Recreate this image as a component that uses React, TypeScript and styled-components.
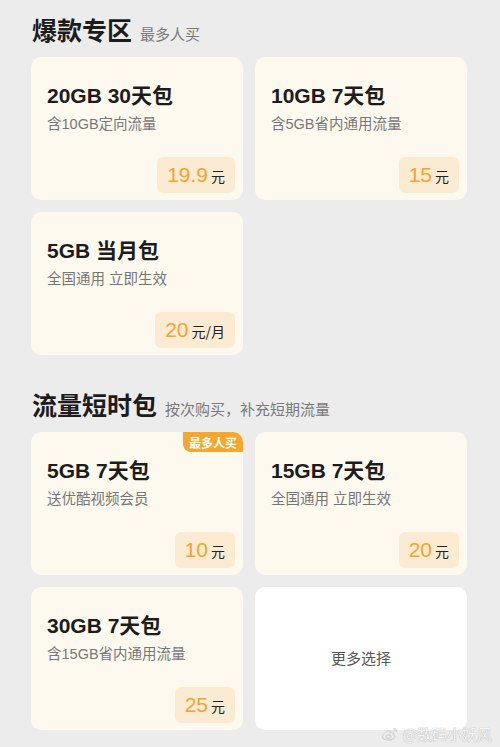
import styled, { createGlobalStyle } from 'styled-components';

type Plan = {
  title: string;
  desc: string;
  price: string;
  unit: string;
  badge?: string;
};

const hotPlans: Plan[] = [
  { title: '20GB 30天包', desc: '含10GB定向流量', price: '19.9', unit: '元' },
  { title: '10GB 7天包', desc: '含5GB省内通用流量', price: '15', unit: '元' },
  { title: '5GB 当月包', desc: '全国通用 立即生效', price: '20', unit: '元/月' },
];

const shortPlans: Plan[] = [
  { title: '5GB 7天包', desc: '送优酷视频会员', price: '10', unit: '元', badge: '最多人买' },
  { title: '15GB 7天包', desc: '全国通用 立即生效', price: '20', unit: '元' },
  { title: '30GB 7天包', desc: '含15GB省内通用流量', price: '25', unit: '元' },
];

const PlanCard = ({ title, desc, price, unit, badge }: Plan) => (
  <Card>
    {badge && <Badge>{badge}</Badge>}
    <CardTitle>{title}</CardTitle>
    <CardDesc>{desc}</CardDesc>
    <PriceRow>
      <PriceBox>
        <Price>{price}</Price>
        <Unit>{unit}</Unit>
      </PriceBox>
    </PriceRow>
  </Card>
);

const WeiboLogo = () => (
  <svg width='18' height='14' viewBox='0 0 18 14' fill='none' stroke='#d4d4d4' strokeWidth='1.3'>
    <path d='M7.5 4.2C4.2 5 1.5 7.4 1.5 9.6c0 2 2.6 3.4 6 3.4 3.8 0 6.6-1.8 6.6-3.7 0-1.3-1.2-1.7-2-2 .5-1 .4-2-.6-2.2-1 -.2-2.3.4-2.3.4.3-1.4-.6-2-1.7-1.3z' />
    <ellipse cx='7.3' cy='9.7' rx='2.4' ry='1.7' />
    <path d='M12.5 1.5c1.8 0 3.3 1.5 3.3 3.3M12.5 3.3c.8 0 1.5.7 1.5 1.5' />
  </svg>
);

export default function App() {
  return (
    <>
      <GlobalStyle />
      <Page>
        <Heading>
          <HeadingTitle>爆款专区</HeadingTitle>
          <HeadingSub>最多人买</HeadingSub>
        </Heading>
        <Grid>
          {hotPlans.map((p) => (
            <PlanCard key={p.title} {...p} />
          ))}
        </Grid>

        <Heading $spaced>
          <HeadingTitle>流量短时包</HeadingTitle>
          <HeadingSub>按次购买，补充短期流量</HeadingSub>
        </Heading>
        <Grid>
          {shortPlans.map((p) => (
            <PlanCard key={p.title} {...p} />
          ))}
          <MoreCard>更多选择</MoreCard>
        </Grid>

        <Watermark>
          <WeiboLogo />
          <span>@数码小妖风</span>
        </Watermark>
      </Page>
    </>
  );
}

const GlobalStyle = createGlobalStyle`
  html, body {
    margin: 0;
    padding: 0;
    background: #ececec;
  }
  body {
    font-family: 'Liberation Sans', 'Noto Sans CJK SC', sans-serif;
  }
`;

const Page = styled.div`
  position: relative;
  width: 500px;
  height: 747px;
  box-sizing: border-box;
  padding: 14px 0 0 31px;
  background: #ececec;
  overflow: hidden;
`;

const Heading = styled.div<{ $spaced?: boolean }>`
  display: flex;
  align-items: baseline;
  gap: 8px;
  height: 30px;
  margin: ${({ $spaced }) => ($spaced ? '34px 0 13px 1px' : '0 0 13px 1px')};
`;

const HeadingTitle = styled.h2`
  margin: 0;
  font-family: 'Noto Sans CJK SC', sans-serif;
  font-size: 25px;
  line-height: 30px;
  font-weight: 700;
  color: #1c1c1c;
`;

const HeadingSub = styled.span`
  font-family: 'Noto Sans CJK SC', sans-serif;
  font-size: 15px;
  color: #7a7a7a;
`;

const Grid = styled.div`
  display: grid;
  grid-template-columns: 212px 212px;
  grid-auto-rows: 143px;
  gap: 12px;
`;

const Card = styled.div`
  position: relative;
  display: flex;
  flex-direction: column;
  box-sizing: border-box;
  padding: 24px 8px 7px 16px;
  background: #fdf9ef;
  border-radius: 10px;
`;

const Badge = styled.div`
  position: absolute;
  top: 0;
  right: 0;
  width: 60px;
  height: 20px;
  display: flex;
  align-items: center;
  justify-content: center;
  background: #f4a62e;
  color: #fff;
  font-family: 'Noto Sans CJK SC', sans-serif;
  font-size: 12px;
  font-weight: 700;
  border-radius: 0 10px 0 8px;
`;

const CardTitle = styled.div`
  font-size: 21px;
  line-height: 30px;
  font-weight: 700;
  color: #1c1c1c;
`;

const CardDesc = styled.div`
  font-size: 14.5px;
  line-height: 20px;
  color: #777;
  margin-top: 3px;
`;

const PriceRow = styled.div`
  margin-top: auto;
  display: flex;
  justify-content: flex-end;
`;

const PriceBox = styled.div`
  display: flex;
  align-items: baseline;
  gap: 3px;
  height: 36px;
  box-sizing: border-box;
  padding: 0 10px;
  line-height: 36px;
  background: #fcebd3;
  border-radius: 6px;
`;

const Price = styled.span`
  font-size: 21px;
  color: #f2a42e;
`;

const Unit = styled.span`
  font-family: 'Noto Sans CJK SC', sans-serif;
  font-size: 14px;
  color: #222;
`;

const MoreCard = styled.div`
  display: flex;
  align-items: center;
  justify-content: center;
  padding-bottom: 3px;
  background: #ffffff;
  border-radius: 10px;
  font-family: 'Noto Sans CJK SC', sans-serif;
  font-size: 15px;
  color: #555;
`;

const Watermark = styled.div`
  position: absolute;
  right: 8px;
  bottom: 3px;
  display: flex;
  align-items: center;
  gap: 4px;
  font-family: 'Noto Sans CJK SC', sans-serif;
  font-size: 15px;
  color: #f4f4f4;
  text-shadow: 0 0 1px #bdbdbd, 0 0 1px #bdbdbd;
`;
